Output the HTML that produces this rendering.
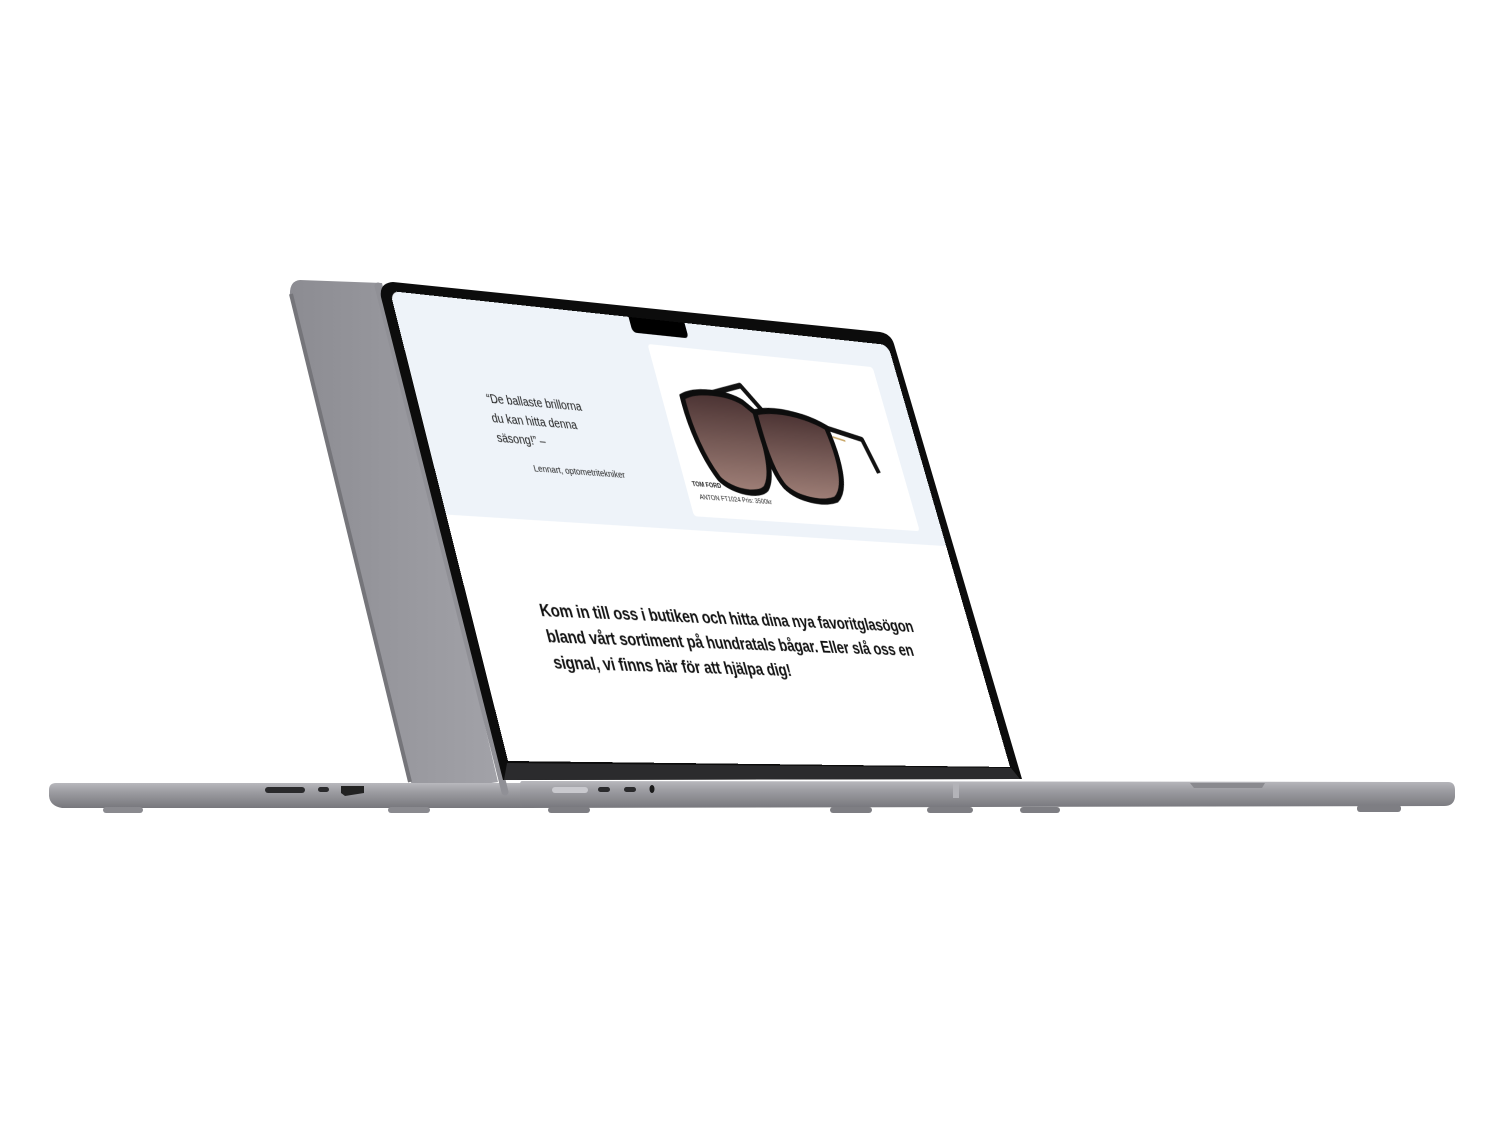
<!DOCTYPE html>
<html><head><meta charset="utf-8">
<style>
html,body{margin:0;padding:0;background:#fff;}
body{width:1501px;height:1125px;position:relative;overflow:hidden;font-family:"Liberation Sans",sans-serif;}
svg.body{position:absolute;left:0;top:0;}
#screen{position:absolute;left:0;top:0;width:1000px;height:720px;transform-origin:0 0;
transform:matrix3d(0.59946,0.09342,0,0.000114252,0.138681,0.615014,0,-0.00004963,0,0,1,0,390,291,0,1);
background:#fff;overflow:hidden;border-radius:16px 16px 0 0;}
.band{position:absolute;left:0;top:0;width:1000px;height:349px;background:#eef3f9;}
.card{position:absolute;left:476px;top:43px;width:474px;height:283px;background:#fff;border-radius:6px;}
.notch{position:absolute;left:452px;top:0;width:113px;height:26px;background:#000;border-radius:0 0 8px 8px;}
.q{position:absolute;left:130px;top:145px;font-size:19.5px;line-height:31px;color:#1a1a1a;white-space:nowrap;}
.att{position:absolute;left:185px;top:258px;font-size:15px;color:#222;white-space:nowrap;}
.tf{position:absolute;left:490px;top:267px;font-size:11px;font-weight:bold;color:#222;}
.an{position:absolute;left:498px;top:288px;font-size:11.5px;color:#222;white-space:nowrap;}
.main{position:absolute;left:128px;top:470px;font-size:27.5px;font-weight:bold;line-height:40px;color:#111;white-space:nowrap;letter-spacing:-0.3px;}
.gl{position:absolute;left:508px;top:84px;}
</style></head><body>
<svg class="body" width="1501" height="1125" viewBox="0 0 1501 1125">
<defs>
<linearGradient id="lid" x1="0" y1="0" x2="1" y2="0"><stop offset="0" stop-color="#8c8c92"/><stop offset="1" stop-color="#a2a2a8"/></linearGradient>
<linearGradient id="base" x1="0" y1="0" x2="0" y2="1"><stop offset="0" stop-color="#b8b8bd"/><stop offset="0.35" stop-color="#9d9da2"/><stop offset="1" stop-color="#77777c"/></linearGradient>
</defs>
<path d="M300,280 L382,283 L498,782 L432,792 Q414,792 410,780 L290,296 Q289,281 300,280 Z" fill="url(#lid)"/>
<path d="M291,294 L410,782" stroke="#75757a" stroke-width="4" fill="none"/>
<path d="M56,783 L530,783 L530,808 L62,808 Q50,806 49,796 L49,790 Q49,783 56,783 Z" fill="url(#base)"/>
<rect x="265" y="787" width="40" height="6" rx="3" fill="#2a2a2c"/>
<rect x="318" y="787" width="11" height="5" rx="2.5" fill="#2a2a2c"/>
<path d="M341,786 L364,786 L364,793 L345,796 L341,793 Z" fill="#222"/>
<g fill="#8a8a8f"><rect x="103" y="807" width="40" height="6" rx="3"/><rect x="388" y="807" width="42" height="6" rx="3"/></g>
<path d="M378,286 L505,792" stroke="#909096" stroke-width="7" fill="none" stroke-linecap="round"/>
<path d="M393,282 L880,332 Q891,334 894,344 L1022,779 L503,780 L381,297 Q379,283 393,282 Z" fill="#0c0c0c"/>
<path d="M507,763 L1011,768 L1020,779 L504,780 Z" fill="#2b2b2d"/>
<path d="M522,781 L1448,782 Q1455,782 1455,790 L1455,797 Q1454,806 1444,806 L526,808 Q520,806 520,800 L520,785 Q520,781 522,781 Z" fill="url(#base)"/>
<path d="M1190,783 L1265,783 L1262,788 L1194,788 Z" fill="#8a8a8f"/>
<rect x="953" y="782" width="6" height="16" fill="#b3b3b8"/>
<rect x="552" y="787" width="36" height="6" rx="3" fill="#c9c9ce"/>
<rect x="598" y="787" width="12" height="5" rx="2.5" fill="#2a2a2c"/>
<rect x="624" y="787" width="12" height="5" rx="2.5" fill="#2a2a2c"/>
<ellipse cx="652" cy="789" rx="2.5" ry="4" fill="#1a1a1a"/>
<g fill="#7e7e83"><rect x="548" y="807" width="42" height="6" rx="3"/><rect x="830" y="807" width="42" height="6" rx="3"/><rect x="927" y="807" width="46" height="6" rx="3"/><rect x="1020" y="807" width="40" height="6" rx="3"/><rect x="1357" y="805" width="44" height="7" rx="3"/></g>
</svg>
<div id="screen">
  <div class="band"></div>
  <div class="card"></div>
  <div class="notch"></div>
  <div class="q">“De ballaste brillorna<br>du kan hitta denna<br>säsong!” –</div>
  <div class="att">Lennart, optometritekniker</div>
  <svg class="gl" width="400" height="210" viewBox="0 0 390 200">
    <defs><linearGradient id="lens" x1="0" y1="0" x2="0" y2="1"><stop offset="0" stop-color="#4a3232"/><stop offset="1" stop-color="#a08078"/></linearGradient></defs>
    <path d="M40,38 L135,12 L170,55" stroke="#111" stroke-width="9" fill="none" stroke-linejoin="round"/>
    <path d="M290,70 L362,85 L378,140" stroke="#111" stroke-width="9" fill="none" stroke-linejoin="round"/>
    <path d="M10,40 C40,25 100,25 130,40 L150,55 C155,120 150,160 130,180 C110,195 60,190 40,170 C20,140 8,90 10,40 Z" fill="url(#lens)" stroke="#0d0d0d" stroke-width="10"/>
    <path d="M150,55 C190,45 250,50 292,70 C302,120 300,170 270,190 C240,200 190,195 170,175 C150,150 150,100 150,55 Z" fill="url(#lens)" stroke="#0d0d0d" stroke-width="10"/>
    <path d="M300,85 L325,90" stroke="#c9a86a" stroke-width="3"/>
  </svg>
  <div class="tf">TOM FORD</div>
  <div class="an">ANTON FT1024 Pris: 3500kr</div>
  <div class="main">Kom in till oss i butiken och hitta dina nya favoritglasögon<br>bland vårt sortiment på hundratals bågar. Eller slå oss en<br>signal, vi finns här för att hjälpa dig!</div>
</div>
</body></html>
